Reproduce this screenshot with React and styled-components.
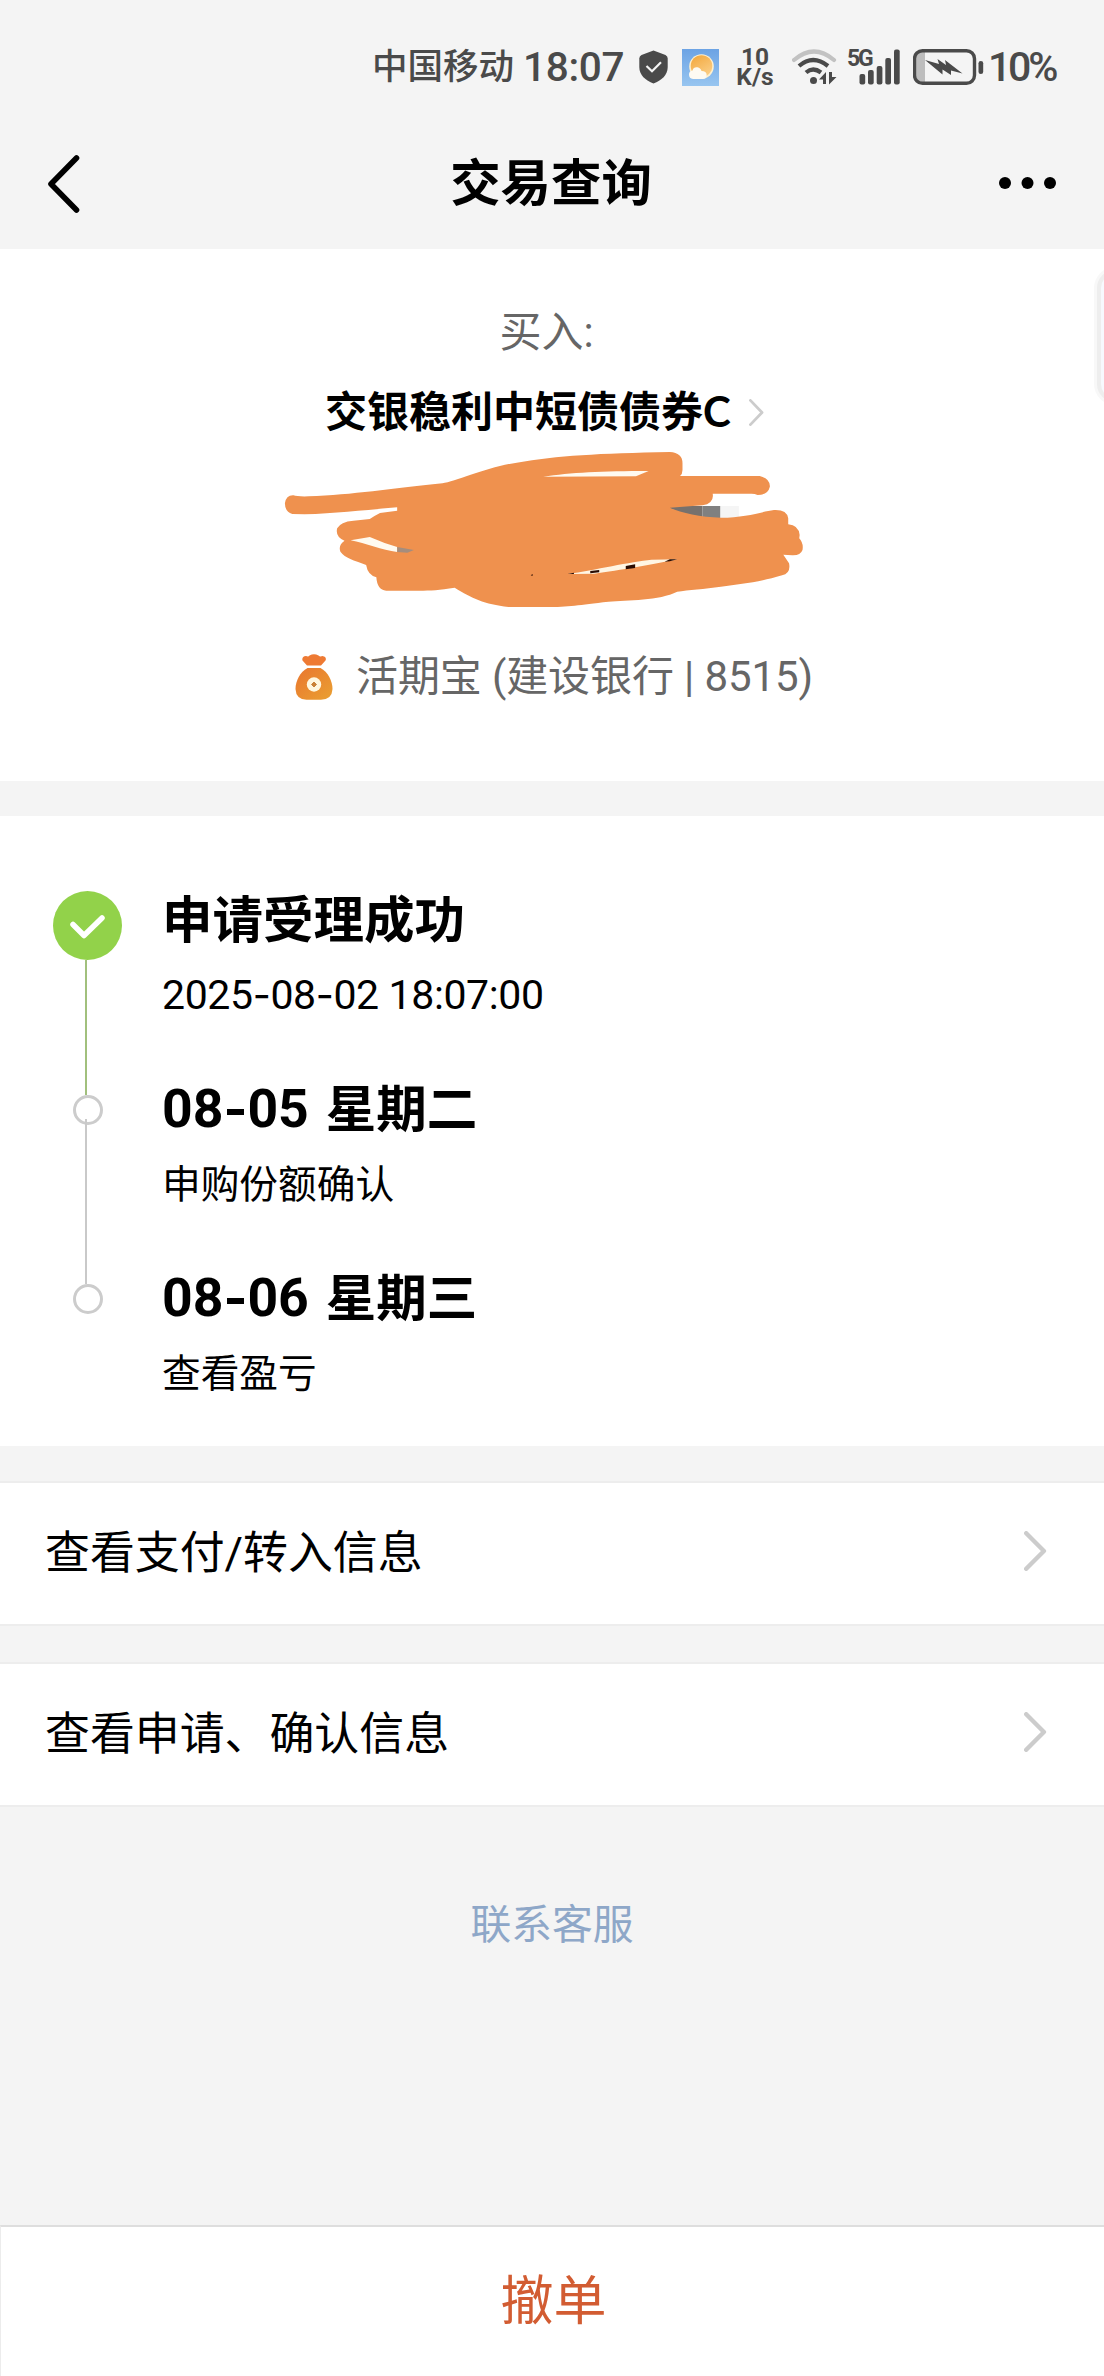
import React from "react";
import styled, { createGlobalStyle } from "styled-components";

const GlobalStyle = createGlobalStyle`
  * {
    box-sizing: border-box;
  }
  body {
    margin: 0;
    background: #f4f4f4;
    font-family: Roboto, "Noto Sans CJK SC", sans-serif;
    color: #000;
  }
  svg {
    display: block;
    flex-shrink: 0;
  }
`;

const Page = styled.div`
  position: relative;
  display: flex;
  flex-direction: column;
  width: 1104px;
  height: 2376px;
  overflow: hidden;
  background: #f4f4f4;
  white-space: nowrap;
`;

const StatusBar = styled.div`
  display: flex;
  align-items: center;
  height: 118px;
  padding: 16px 0 0 372px;
  color: #4a4a4a;
`;

const Carrier = styled.span`
  width: 151px;
  font-size: 35.5px;
  line-height: 40px;
  font-weight: 500;
`;

const Clock = styled.span`
  width: 116px;
  font-size: 40.5px;
  line-height: 40px;
  font-weight: 500;
  letter-spacing: -0.3px;
`;

const NetSpeed = styled.div`
  display: flex;
  flex-direction: column;
  align-items: center;
  width: 40px;
  margin: 0 17px 0 16px;
  font-size: 24.5px;
  line-height: 20px;
  font-weight: 700;
`;

const Percent = styled.span`
  margin-left: 4px;
  font-size: 41px;
  line-height: 40px;
  font-weight: 500;
  letter-spacing: -3.2px;
`;

const ShieldSvg = styled.svg`
  margin-right: 14px;
`;

const SignalGroup = styled.div`
  display: flex;
  align-items: flex-start;
  height: 36px;
  margin: 0 13px 0 10px;
`;

const NetType = styled.span`
  width: 12px;
  font-size: 23px;
  line-height: 20px;
  font-weight: 700;
  letter-spacing: -2.2px;
`;

const NavBar = styled.div`
  display: flex;
  align-items: center;
  justify-content: space-between;
  height: 131px;
  padding: 0 48px;
`;

const NavTitle = styled.h1`
  margin: 0 0 0 23px;
  font-size: 50.4px;
  line-height: 60px;
  font-weight: 700;
`;

const Summary = styled.div`
  display: flex;
  flex-direction: column;
  align-items: center;
  height: 532px;
  padding-top: 58px;
  background: #fff;
`;

const Direction = styled.div`
  margin-left: -11px;
  font-size: 42px;
  line-height: 52px;
  color: #666;
`;

const FundName = styled.div`
  display: flex;
  align-items: center;
  margin: 26px 0 0 -15px;
  gap: 18px;
  font-size: 42px;
  line-height: 52px;
  font-weight: 700;
`;

const FundClass = styled.span`
  font-family: Lato, sans-serif;
`;

const Scribble = styled.svg`
  margin: 11px 0 0 -18px;
`;

const Account = styled.div`
  display: flex;
  align-items: center;
  margin: 39px 0 0 4px;
  gap: 23px;
  font-size: 42px;
  line-height: 56px;
  letter-spacing: -0.12px;
  color: #666;
`;

const Timeline = styled.div`
  display: flex;
  flex-direction: column;
  height: 630px;
  margin-top: 35px;
  padding: 75px 0 0 53px;
  background: #fff;
`;

const Step = styled.div`
  display: flex;
  height: ${({ $height }) => $height}px;
`;

const Rail = styled.div`
  display: flex;
  flex-direction: column;
  align-items: center;
  width: 69px;
  margin-right: 40px;
`;

const Connector = styled.div`
  flex: 1;
  width: 2px;
  margin: ${({ $overlap }) => ($overlap ? "-6px" : "0")} 3px 0 0;
  background: ${({ $done }) => ($done ? "#a1c07d" : "#c9c9c9")};
`;

const Dot = styled.div`
  width: 30px;
  height: 30px;
  border: 3px solid #ccc;
  border-radius: 50%;
`;

const StepBody = styled.div`
  display: flex;
  flex-direction: column;
  margin-top: ${({ $offset }) => $offset}px;
`;

const StepTitle = styled.div`
  font-size: 50.5px;
  line-height: 60px;
  font-weight: 700;
`;

const StepDay = styled.span`
  margin-right: 17px;
  font-size: 53.5px;
  letter-spacing: 0;
`;

const StepNote = styled.div`
  margin-top: 20px;
  font-size: 38.7px;
  line-height: 50px;
`;

const StepTime = styled(StepNote)`
  margin-top: 19px;
  font-size: 41px;
  letter-spacing: -0.38px;
`;

const Dash = styled.span`
  font-family: Inter, sans-serif;
  font-size: 0.96em;
`;

const LinkRow = styled.div`
  display: flex;
  align-items: center;
  justify-content: space-between;
  height: 145px;
  margin-top: ${({ $gap }) => $gap}px;
  padding: 0 57px 0 45px;
  border-top: 2px solid #ededed;
  border-bottom: 2px solid #ededed;
  background: #fff;
  font-size: 44.9px;
  line-height: 60px;

  svg {
    margin-bottom: 5px;
  }
`;

const Support = styled.div`
  margin-top: 88px;
  text-align: center;
  font-size: 40.8px;
  line-height: 60px;
  color: #8ea7c8;
`;

const CancelBar = styled.button`
  height: 151px;
  margin-top: auto;
  padding: 0 0 0 2px;
  border: 0;
  border-top: 2px solid #dedede;
  border-left: 1px solid #ececec;
  background: #fff;
  font-family: inherit;
  font-size: 53px;
  line-height: 60px;
  color: #d25c32;
`;

const SideHandle = styled.div`
  position: absolute;
  top: 270px;
  right: -30px;
  width: 37px;
  height: 132px;
  border: 4px solid #eeeeee;
  border-radius: 18px;
  background: #f7f9fe;
  box-shadow: 0 0 0 3px #f8f8f8;
`;

const ShieldIcon = () => (
  <ShieldSvg width="29" height="34" viewBox="0 0 29 34">
    <path
      d="M14.5 0.5 L26.5 5 Q28.7 6 28.7 8.5 V17 C28.7 25 22.5 30.5 14.5 33.5 C6.5 30.5 0.3 25 0.3 17 V8.5 Q0.3 6 2.5 5 Z"
      fill="#4a4a4a"
    />
    <path d="M7.5 16 L13 21.3 L22 12.3" fill="none" stroke="#f4f4f4" strokeWidth="2.2" />
  </ShieldSvg>
);

const WeatherIcon = () => (
  <svg width="37" height="37" viewBox="0 0 37 37">
    <defs>
      <linearGradient id="sky" x1="0" y1="0" x2="0" y2="1">
        <stop offset="0" stopColor="#6ca3e4" />
        <stop offset="1" stopColor="#97c5f0" />
      </linearGradient>
      <linearGradient id="sun" x1="0.2" y1="0" x2="0.8" y2="1">
        <stop offset="0" stopColor="#f3a93f" />
        <stop offset="1" stopColor="#fbd08a" />
      </linearGradient>
    </defs>
    <rect width="37" height="37" fill="url(#sky)" />
    <circle cx="19.5" cy="17.5" r="12.3" fill="#fdf0d0" />
    <circle cx="19.5" cy="17" r="10.8" fill="url(#sun)" />
    <path
      d="M11 30 Q7 29.5 7 25.5 Q7 22 10.5 21.5 Q11.5 17.8 15.5 18.3 Q18.5 18.7 19.5 22 Q24.5 22 24.7 26 Q24.5 30 20.5 30 Z"
      fill="#fdfaf2"
    />
  </svg>
);

const WifiIcon = () => (
  <svg width="45" height="36" viewBox="0 0 45 36" fill="none">
    <path d="M2 11 Q22 -6 42 11" stroke="#c2c2c2" strokeWidth="4.2" strokeLinecap="round" />
    <path d="M7 17 Q21 5 36 17" stroke="#4a4a4a" strokeWidth="4.2" />
    <path d="M14 23.5 Q21 17.5 29 23.5" stroke="#4a4a4a" strokeWidth="4.2" />
    <circle cx="21.5" cy="31.5" r="3.5" fill="#4a4a4a" />
    <path d="M27 30.5 L34 23 V35 H31 V30.5 Z" fill="#4a4a4a" />
    <path d="M37 23 H40 V28 H44.5 L37 35.5 Z" fill="#4a4a4a" />
  </svg>
);

const SignalIcon = () => (
  <svg width="41" height="36" viewBox="12 0 41 36" fill="#4a4a4a">
    <rect x="12.5" y="25" width="5.7" height="10.5" rx="2" />
    <rect x="21" y="21" width="5.7" height="14.5" rx="2" />
    <rect x="29.7" y="17" width="5.7" height="18.5" rx="2" />
    <rect x="38.3" y="9" width="5.7" height="26.5" rx="2" />
    <rect x="47" y="0.5" width="5.7" height="35" rx="2" />
  </svg>
);

const BatteryIcon = () => (
  <svg width="71" height="36" viewBox="0 0 71 36">
    <path d="M12 3 V33 H10 Q3 33 3 26 V10 Q3 3 10 3 Z" fill="#bdbdbd" />
    <rect x="1.5" y="1.7" width="60" height="32.6" rx="8" fill="none" stroke="#4a4a4a" strokeWidth="3.4" />
    <rect x="65.5" y="12" width="4.7" height="13" rx="2.3" fill="#4a4a4a" />
    <path d="M12 11 L26 15 L24.5 10 L33 16 L32 11 L49.5 24.5 L38 21.5 L38 26 L29.5 20.5 L29.5 25.5 Z" fill="#4a4a4a" />
  </svg>
);

const Chevron = ({ width, height, stroke, color = "#ccc" }) => (
  <svg width={width} height={height} fill="none">
    <path
      d={`M${stroke / 2} ${stroke / 2} L${width - stroke * 0.7} ${height / 2} L${stroke / 2} ${height - stroke / 2}`}
      stroke={color}
      strokeWidth={stroke}
      strokeLinecap="round"
      strokeLinejoin="round"
    />
  </svg>
);

const BackIcon = () => (
  <svg width="32" height="58" viewBox="0 0 32 58" fill="none">
    <path d="M28.5 3 L3 29 L28.5 55" stroke="#000" strokeWidth="5.6" strokeLinecap="round" strokeLinejoin="round" />
  </svg>
);

const MoreIcon = () => (
  <svg width="57" height="14" viewBox="0 0 57 14">
    <circle cx="6" cy="6" r="6" />
    <circle cx="28.5" cy="6" r="6" />
    <circle cx="51" cy="6" r="6" />
  </svg>
);

const BagIcon = () => (
  <svg width="38" height="46" viewBox="0 0 38 46">
    <defs>
      <linearGradient id="bag" x1="0" y1="0" x2="1" y2="1">
        <stop offset="0" stopColor="#e9762f" />
        <stop offset="1" stopColor="#eaa032" />
      </linearGradient>
    </defs>
    <path
      d="M12 11.5 L7.5 6.500 Q6.5 2.5 11 2 Q13.5 3 14.5 1.5 Q19 -1 23.5 1.5 Q25 3 27.5 2 Q32 3 30.5 6.5 L26 11.5 Z"
      fill="#ee7a33"
    />
    <path
      d="M12.5 14 H25.5 C33 18 37.5 27 37.5 35 Q37 45.5 26 45.7 H11.5 Q1 45.5 0.5 35 C0.5 27 5 18 12.5 14 Z"
      fill="url(#bag)"
    />
    <circle cx="19" cy="30.5" r="7.2" fill="#fff7df" />
    <path d="M19 28 L21.5 30.5 L19 33 L16.5 30.5 Z" fill="#c98238" stroke="#c98238" strokeLinejoin="round" />
  </svg>
);

const CheckIcon = () => (
  <svg width="69" height="69" viewBox="0 0 69 69">
    <circle cx="34.5" cy="34.5" r="34.5" fill="#92d24a" />
    <path
      d="M20 33.5 L31 44.5 L49 27"
      fill="none"
      stroke="#fff"
      strokeWidth="5.5"
      strokeLinecap="round"
      strokeLinejoin="round"
    />
  </svg>
);

// 금액을 가린 펜 자국
const PenMark = () => (
  <Scribble width="527" height="160" viewBox="170 480 1291 480" preserveAspectRatio="none">
    <path d="M1120 648 H1205 V690 H1120 Z" fill="#77716d" />
    <path d="M1205 648 H1249 V690 H1205 Z" fill="#808080" />
    <path d="M1249 648 H1294 V690 H1249 Z" fill="#f5f5f5" />
    <path
      d="M182 640 Q185 615 203 616 Q212 620 240 619 C350 615 440 595 568 580 C600 575 680 530 750 518 C850 497 950 490 1125 486 Q1156 488 1156 520 L1156 540 Q1156 552 1150 558 L1345 558 Q1371 565 1370 590 Q1365 615 1340 615 Q1333 611 1325 611 L1230 611 Q1234 640 1205 646 L1125 653 C1150 668 1200 682 1250 683 C1310 683 1350 665 1380 660 Q1412 658 1415 685 L1415 703 Q1440 705 1443 735 L1442 745 Q1453 760 1450 780 Q1445 797 1425 796 L1403 794 L1417 820 Q1422 850 1400 856 C1340 878 1300 882 1250 890 C1210 897 1170 900 1143 905 C1100 932 1020 930 975 935 C900 945 880 951 820 951 L730 951 C670 942 640 925 598 893 C560 900 540 902 510 902 L430 902 Q408 900 406 862 Q385 855 381 825 C350 810 330 805 318 785 Q312 765 328 752 Q305 740 310 715 Q318 695 350 692 L390 687 Q405 675 415 669 L457 662 L457 652 C380 660 310 670 230 673 L200 672 Q182 665 182 640 Z"
      fill="#ef914e"
    />
    <path d="M815 560 C880 548 960 543 1073 543 L1042 559 Z" fill="#fffaf0" />
    <path d="M343 751 L390 741 Q425 760 457 771 L457 786 C420 780 380 760 343 751 Z" fill="#fffaf0" />
    <path d="M457 771 L498 780 L482 788 L457 786 Z" fill="#a58d7d" />
    <path d="M875 852 C940 840 1030 815 1080 809 L1143 808 C1090 822 1000 842 940 851 Z" fill="#fff6e4" />
    <path d="M875 852 L890 848 V852 Z M930 843 L952 840 V847 L930 850 Z M1017 828 L1040 823 V834 L1017 838 Z M1112 815 L1125 808 H1143 L1125 814 Z M784 855 L790 853 L788 858 Z" fill="#2a0c02" />
  </Scribble>
);

const withDashes = (text) =>
  text.split("-").map((part, index) => (
    <React.Fragment key={index}>
      {index > 0 && <Dash>-</Dash>}
      {part}
    </React.Fragment>
  ));

const App = () => {
  return (
    <Page>
      <GlobalStyle />
      <StatusBar>
        <Carrier>中国移动</Carrier>
        <Clock>18:07</Clock>
        <ShieldIcon />
        <WeatherIcon />
        <NetSpeed>
          <span>10</span>
          <span>K/s</span>
        </NetSpeed>
        <WifiIcon />
        <SignalGroup>
          <NetType>5G</NetType>
          <SignalIcon />
        </SignalGroup>
        <BatteryIcon />
        <Percent>10%</Percent>
      </StatusBar>
      <NavBar>
        <BackIcon />
        <NavTitle>交易查询</NavTitle>
        <MoreIcon />
      </NavBar>
      <Summary>
        <Direction>买入:</Direction>
        <FundName>
          <span>
            交银稳利中短债债券<FundClass>C</FundClass>
          </span>
          <Chevron width={15} height={27} stroke={2.8} />
        </FundName>
        <PenMark />
        <Account>
          <BagIcon />
          <span>活期宝 (建设银行 | 8515)</span>
        </Account>
      </Summary>
      <Timeline>
        <Step $height={204}>
          <Rail>
            <CheckIcon />
            <Connector $done />
          </Rail>
          <StepBody $offset={0}>
            <StepTitle>申请受理成功</StepTitle>
            <StepTime>{withDashes("2025-08-02 18:07:00")}</StepTime>
          </StepBody>
        </Step>
        <Step $height={189}>
          <Rail>
            <Dot />
            <Connector $overlap />
          </Rail>
          <StepBody $offset={-17}>
            <StepTitle>
              <StepDay>{withDashes("08-05")}</StepDay>星期二
            </StepTitle>
            <StepNote>申购份额确认</StepNote>
          </StepBody>
        </Step>
        <Step $height={120}>
          <Rail>
            <Dot />
          </Rail>
          <StepBody $offset={-17}>
            <StepTitle>
              <StepDay>{withDashes("08-06")}</StepDay>星期三
            </StepTitle>
            <StepNote>查看盈亏</StepNote>
          </StepBody>
        </Step>
      </Timeline>
      <LinkRow $gap={35}>
        <span>查看支付/转入信息</span>
        <Chevron width={23} height={40} stroke={4.4} />
      </LinkRow>
      <LinkRow $gap={36}>
        <span>查看申请、确认信息</span>
        <Chevron width={23} height={40} stroke={4.4} />
      </LinkRow>
      <Support>联系客服</Support>
      <CancelBar>撤单</CancelBar>
      <SideHandle />
    </Page>
  );
};

export default App;
